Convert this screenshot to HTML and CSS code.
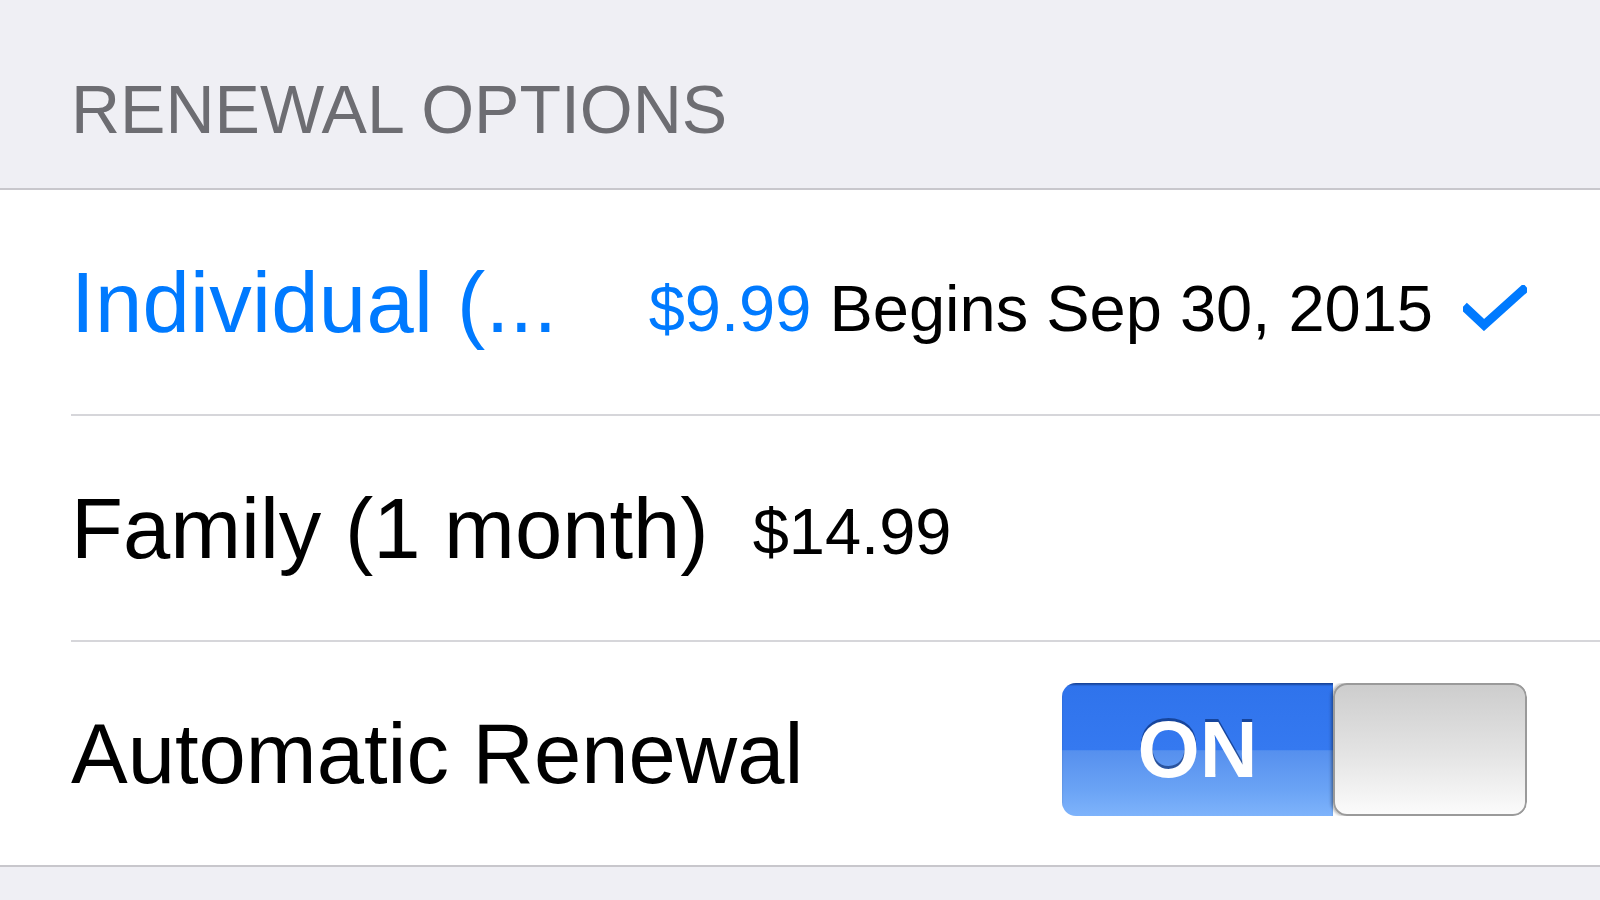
FILE: index.html
```html
<!DOCTYPE html>
<html>
<head>
<meta charset="utf-8">
<link rel="stylesheet" href="styles.css">
</head>
<body>
<div class="page">
  <div class="section-header">RENEWAL OPTIONS</div>
  <div class="group">
    <div class="row">
      <div class="row-inner">
        <span class="title selected">Individual (...</span>
        <span class="detail"><span class="price-blue">$9.99</span> Begins Sep 30, 2015</span>
        <svg class="check" viewBox="0 0 64 46" width="64" height="46"><polyline points="4,24 21,40 60,5" fill="none" stroke="#007aff" stroke-width="9" stroke-linecap="square" stroke-linejoin="miter"/></svg>
      </div>
    </div>
    <div class="row">
      <div class="row-inner">
        <span class="title">Family (1 month)</span>
        <span class="price">$14.99</span>
      </div>
    </div>
    <div class="row last">
      <div class="row-inner">
        <span class="title grow">Automatic Renewal</span>
        <div class="switch">
          <div class="switch-on"><span class="on-label">ON</span></div>
          <div class="switch-knob"></div>
        </div>
      </div>
    </div>
  </div>
  <div class="footer"></div>
</div>
</body>
</html>
```
FILE: styles.css
```css
html, body {
  margin: 0;
  padding: 0;
  background: #efeff4;
}
body {
  width: 1600px;
  height: 900px;
  overflow: hidden;
  font-family: "Liberation Sans", Arial, Helvetica, sans-serif;
}
.page {
  display: flex;
  flex-direction: column;
  height: 900px;
}
.section-header {
  box-sizing: border-box;
  height: 190px;
  padding: 75px 0 0 71px;
  font-size: 68px;
  line-height: 1;
  color: #6d6d72;
  border-bottom: 2px solid #c8c7cc;
}
.group {
  background: #ffffff;
  border-bottom: 2px solid #c8c7cc;
}
.row {
  padding-left: 71px;
}
.row-inner {
  box-sizing: border-box;
  height: 226px;
  display: flex;
  align-items: center;
  padding-right: 73px;
  border-bottom: 2px solid #d6d6da;
}
.row.last .row-inner {
  border-bottom: none;
  height: 223px;
}
.title {
  font-size: 85px;
  line-height: 1;
  color: #000;
  white-space: nowrap;
}
.title.selected {
  color: #007aff;
  flex: 1;
  letter-spacing: 0.3px;
}
.title.grow {
  flex: 1;
}
.detail {
  font-size: 65px;
  line-height: 1;
  color: #000;
  white-space: nowrap;
  margin-top: 13px;
}
.price-blue {
  color: #007aff;
}
.price {
  font-size: 65px;
  line-height: 1;
  color: #000;
  margin-left: 44px;
  margin-top: 6px;
}
.check {
  margin-left: 30px;
  margin-top: 12px;
  display: block;
}
.switch {
  display: flex;
  width: 465px;
  height: 133px;
  border-radius: 14px;
  overflow: hidden;
  box-sizing: border-box;
  margin-bottom: 8px;
}
.switch-on {
  flex: 1;
  display: flex;
  align-items: center;
  justify-content: center;
  padding-right: 8px;
  background: linear-gradient(to bottom, #1a4fb8 0, #2f73ec 3px, #3579f0 50%, #5690ee 51%, #6aa3f5 80%, #7eb3fb 100%);
  box-shadow: inset 0 2px 2px rgba(0,0,0,0.2);
}
.on-label {
  font-size: 80px;
  font-weight: bold;
  color: #ffffff;
  line-height: 1;
  padding-left: 8px;
  text-shadow: 0 -3px 0 rgba(0, 30, 90, 0.55);
}
.switch-knob {
  width: 194px;
  box-sizing: border-box;
  border: 2px solid #9a9a9a;
  border-radius: 14px;
  background: linear-gradient(to bottom, #cdcdcd 0%, #e2e2e2 50%, #fbfbfb 100%);
  box-shadow: -2px 0 3px rgba(0,0,0,0.3);
}
.footer {
  flex: 1;
  background: #efeff4;
}
```
